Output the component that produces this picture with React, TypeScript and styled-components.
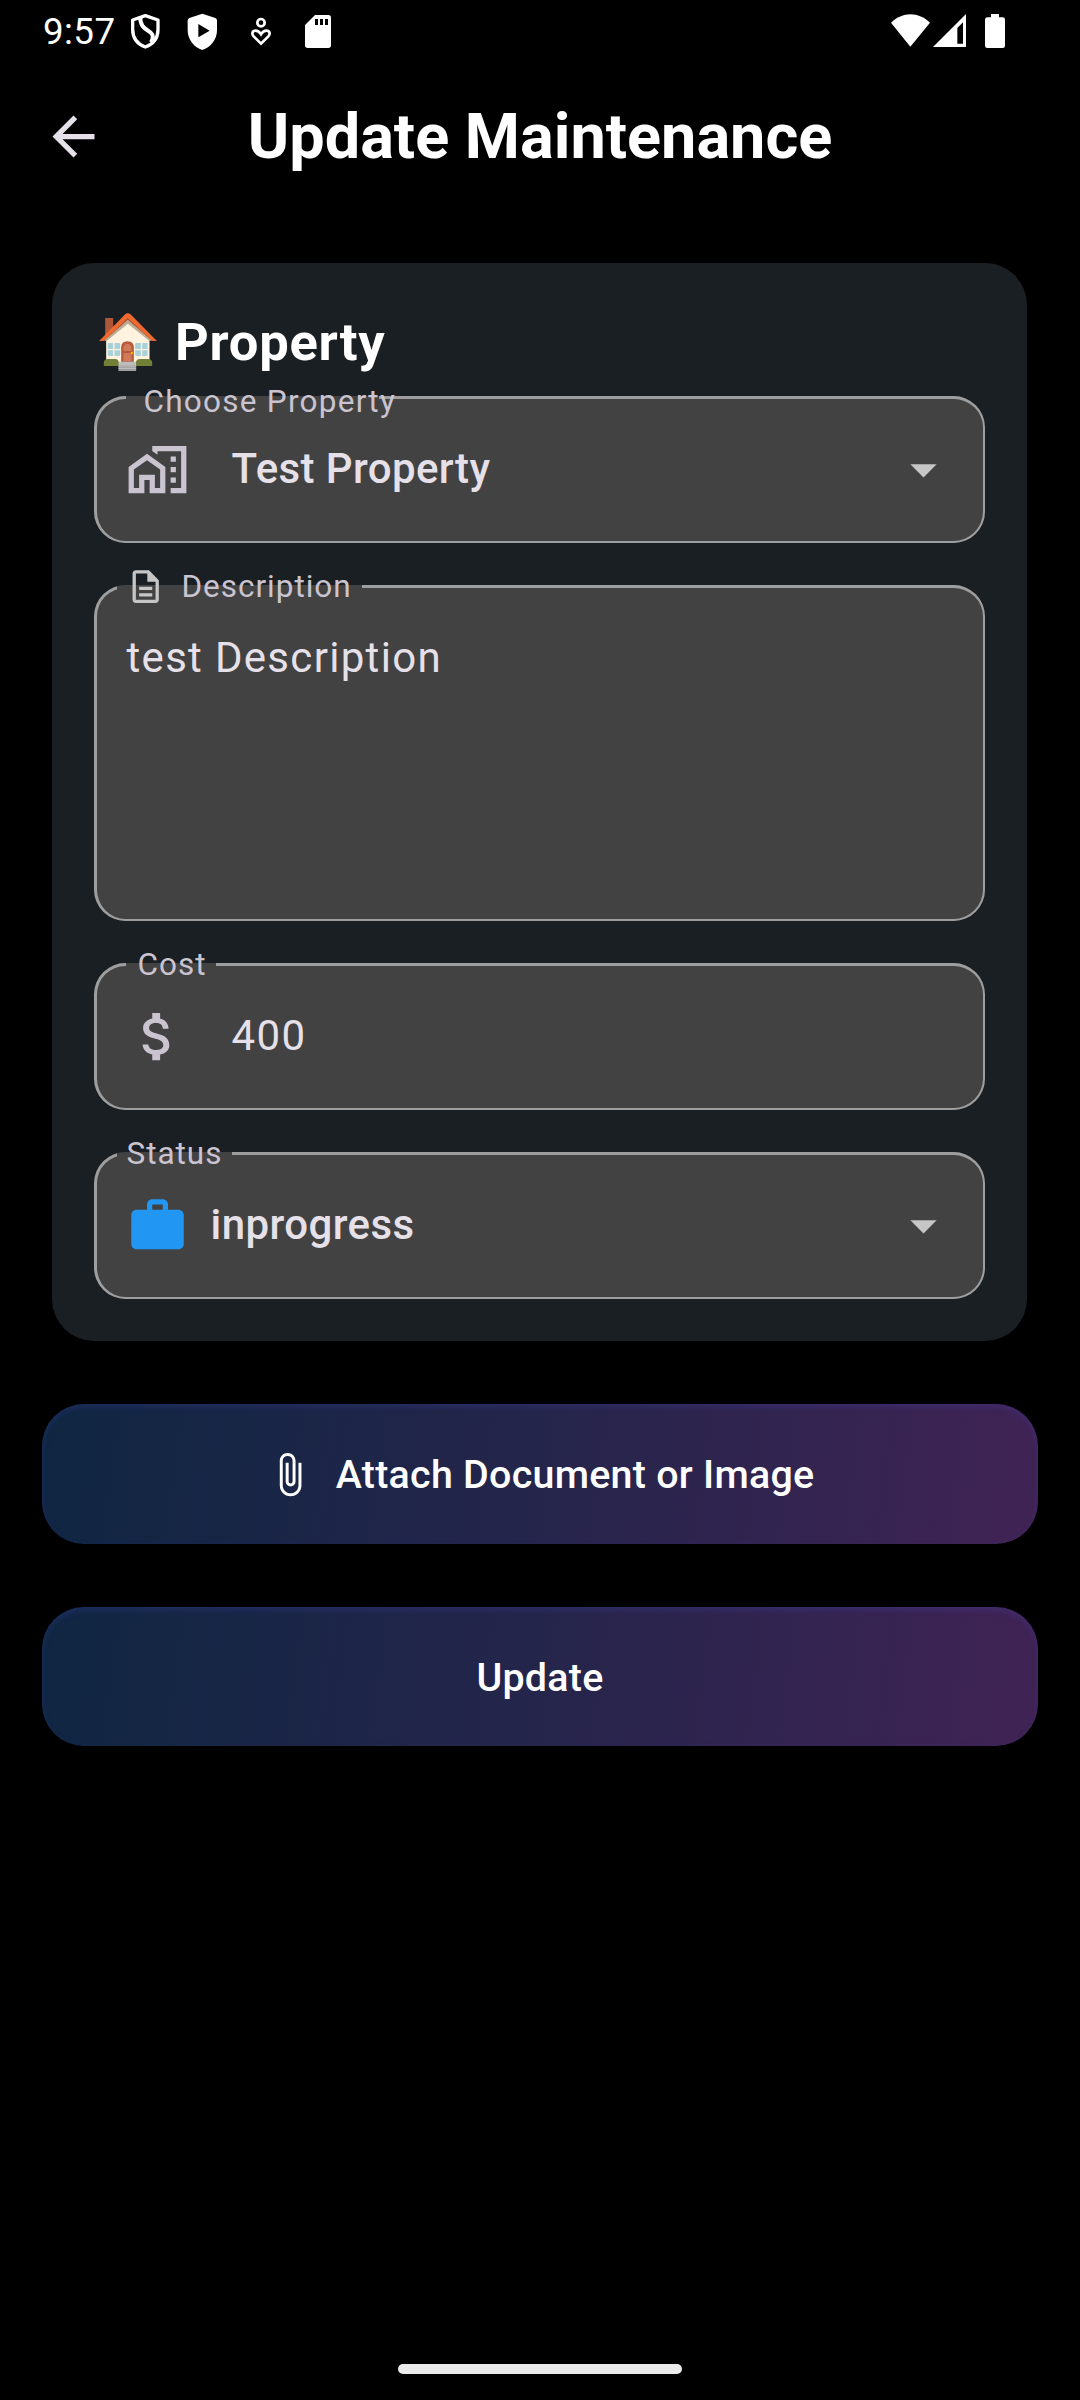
import React from "react";
import styled, { createGlobalStyle } from "styled-components";
import {
  MdArrowBack,
  MdArrowDropDown,
  MdAttachFile,
  MdAttachMoney,
  MdOutlineDescription,
  MdOutlineHomeWork,
  MdWork,
} from "react-icons/md";

const GlobalStyle = createGlobalStyle`
  *, *::before, *::after { box-sizing: border-box; }
  body { margin: 0; background: #000; }
`;

const Screen = styled.div`
  width: 1080px;
  height: 2400px;
  background: #000;
  display: flex;
  flex-direction: column;
  font-family: Roboto, "Liberation Sans", sans-serif;
  color: #e6e0e9;
  overflow: hidden;
  svg { display: block; flex: none; }
`;

const StatusBar = styled.div`
  height: 63px;
  padding: 0 75px 0 43px;
  display: flex;
  justify-content: space-between;
`;

const Clock = styled.span`
  font-size: 36.75px;
  line-height: 43px;
  letter-spacing: 0.4px;
  color: #fff;
  width: 87px;
  margin-top: 10px;
  white-space: nowrap;
`;

const StatusGroup = styled.div`
  display: flex;
  align-items: flex-start;
`;

const Glyph = styled.svg<{ $top: number; $left?: number }>`
  margin-top: ${(p) => p.$top}px;
  margin-left: ${(p) => p.$left ?? 0}px;
`;

const AppBar = styled.header`
  height: 147px;
  padding: 0 42px;
  display: grid;
  grid-template-columns: 63px 1fr 63px;
  align-items: center;
`;

const Title = styled.h1`
  margin: 0;
  text-align: center;
  font-size: 63px;
  line-height: 74px;
  font-weight: 700;
  color: #fff;
  white-space: nowrap;
`;

const Card = styled.section`
  margin: 53px 53px 0 52px;
  padding: 42px;
  height: 1078px;
  border-radius: 42px;
  background: #1a1f23;
  display: flex;
  flex-direction: column;
`;

const Heading = styled.h2`
  margin: 5px 0 0 5px;
  height: 64px;
  display: flex;
  align-items: center;
  gap: 18px;
  font-size: 52.5px;
  line-height: 62px;
  font-weight: 700;
  letter-spacing: 0.75px;
  color: #fff;
`;

/* The outline sits half a legend below the top of the fieldset. */
const Outlined = styled.fieldset<{ $height: number; $first?: boolean }>`
  min-width: 0;
  margin: ${(p) => (p.$first ? 5 : 25)}px 0 0;
  padding: 0;
  height: ${(p) => p.$height + 17}px;
  border: solid #9e9e9e;
  border-width: 3px 2px 2px 3px;
  border-radius: 31.5px;
  background: #424242;
`;

const Legend = styled.legend<{ $inset: number; $width: number; $pad: number; $drop?: number }>`
  margin-left: ${(p) => p.$inset}px;
  padding: ${(p) => (p.$drop ?? 0) * 2}px 0 0 ${(p) => p.$pad}px;
  width: ${(p) => p.$width}px;
  height: 37px;
  display: flex;
  align-items: center;
  font-size: 31.5px;
  line-height: 37px;
  letter-spacing: ${(p) => (p.$drop ? 1.25 : 0.98)}px;
  color: #cac4d0;
  white-space: nowrap;
`;

const LegendIcon = styled.span`
  margin: 0 16px 0 -1px;
  color: #c6c6c6;
`;

const Row = styled.div<{ $gap: number }>`
  height: 125px;
  margin-top: -16px;
  padding: 13px 28px 0 29px;
  display: flex;
  align-items: center;
  gap: ${(p) => p.$gap}px;
`;

const Lead = styled.span<{ $color?: string }>`
  color: ${(p) => p.$color ?? "#cac4d0"};
`;

const Value = styled.span<{ $medium?: boolean }>`
  flex: 1;
  padding-left: 0.6px;
  font-size: 42px;
  line-height: 50px;
  margin-top: -1px;
  font-weight: ${(p) => (p.$medium ? 500 : 400)};
  letter-spacing: ${(p) => (p.$medium ? 0.4 : 1.31)}px;
`;

const Caret = styled.span`
  color: #c6c6c6;
`;

const Paragraph = styled.p`
  margin: 21px 29px 0 29.5px;
  font-size: 42px;
  line-height: 63px;
  letter-spacing: 1.31px;
`;

const Actions = styled.div`
  padding: 63px 42px 0;
  display: flex;
  flex-direction: column;
  gap: 63px;
`;

const GradientButton = styled.button<{ $height: number }>`
  height: ${(p) => p.$height}px;
  padding: ${(p) => 141 - p.$height}px 0 0;
  border: 0;
  border-radius: 42px;
  display: flex;
  align-items: center;
  justify-content: center;
  gap: 23px;
  background: linear-gradient(98deg, #0f2642 0%, #25254b 50%, #402355 100%);
  box-shadow: inset 0 3px 6px rgba(80, 80, 210, 0.2);
  color: #fff;
  font-family: inherit;
  font-size: 39.4px;
  line-height: 46px;
  font-weight: 500;
  letter-spacing: 0.26px;
`;

const Spacer = styled.div`
  flex: 1;
`;

const HomeIndicator = styled.div`
  width: 284px;
  height: 10px;
  margin: 0 auto 26px;
  border-radius: 5px;
  background: #ebebeb;
`;

const SwirlShield = () => (
  <Glyph $top={13} width={31} height={37} viewBox="387 39 93 111" fill="none" stroke="#fff" strokeWidth="10">
    <path d="M433 47 L471 60 V88 C471 115 456 133 433 141 C410 133 395 115 395 88 V60 Z" strokeLinejoin="round" />
    <path d="M418 50 C416 90 446 88 454 104 C457 111 454 120 450 127" strokeWidth="12" />
  </Glyph>
);

const PlayShield = () => (
  <Glyph $top={13} $left={26} width={31} height={37} viewBox="560 39 93 111">
    <path
      fill="#fff"
      fillRule="evenodd"
      d="M606 41 L645 54 Q650 56 650 61 V91 C650 120 630 143 606 150 C582 143 562 120 562 91 V61 Q562 56 567 54 Z M594 72 V112 L628 92 Z"
    />
  </Glyph>
);

const PersonHeart = () => (
  <Glyph $top={17} $left={32} width={22} height={29} viewBox="747 51 66 87" fill="none" stroke="#fff" strokeWidth="8">
    <circle cx="780" cy="68" r="11" />
    <path d="M780 131 L758 109 C751 101 754 92 764 92 C773 92 776 97 780 103 C784 97 787 92 796 92 C806 92 809 101 802 109 Z" />
  </Glyph>
);

const SdCard = () => (
  <Glyph $top={15} $left={33} width={26} height={33} viewBox="915 45 78 99">
    <path
      fill="#fff"
      fillRule="evenodd"
      d="M945 45 H985 Q993 45 993 53 V136 Q993 144 985 144 H923 Q915 144 915 136 V75 Z M945 57 V75 H954 V57 Z M960 57 V75 H969 V57 Z M975 57 V75 H984 V57 Z"
    />
  </Glyph>
);

const Wifi = () => (
  <Glyph $top={14} width={39} height={33} viewBox="153 42 117 99">
    <path fill="#fff" d="M153 68 C187 34 236 34 270 68 L211 140 Z" />
  </Glyph>
);

const Signal = () => (
  <Glyph $top={14} $left={3} width={33} height={33} viewBox="279 42 99 99">
    <path fill="#fff" fillRule="evenodd" d="M378 42 V141 H279 Z M369 67 L352 84 V131 H369 Z" />
  </Glyph>
);

const Battery = () => (
  <Glyph $top={14} $left={19} width={20} height={34} viewBox="435 42 60 102">
    <path fill="#fff" d="M453 42 H477 V52 H488 Q495 52 495 59 V137 Q495 144 488 144 H442 Q435 144 435 137 V59 Q435 52 442 52 H453 Z" />
  </Glyph>
);

const House = () => (
  <svg width="58" height="58" viewBox="177 192 173 174">
    <path fill="#ae5738" d="M195 207 H219 V238 L195 260 Z" />
    <path fill="#fff3e0" d="M198 262 L263 212 L328 262 V350 H198 Z" />
    <path fill="#bcaa94" d="M190 274 L263 210 L337 274 L328 276 L263 224 L199 276 Z" />
    <path fill="#a9502f" d="M177 276 L263 200 L350 276 H337 L263 212 L190 276 Z" />
    <path fill="#f0692f" d="M177 276 L255 196 Q263 189 271 196 L350 276 L336 275 L263 207 L191 275 Z" />
    <g fill="#a9d1d9">
      <rect x="203" y="282" width="37" height="39" rx="4" />
      <rect x="285" y="282" width="37" height="39" rx="4" />
    </g>
    <path stroke="#fff3e0" strokeWidth="4" d="M203 302 H240 M221 282 V321 M285 302 H322 M304 282 V321" />
    <path fill="#b55a3c" d="M243 340 V295 Q243 277 262 277 Q281 277 281 295 V340 Z" />
    <path fill="#d17a5a" d="M250 306 V297 Q251 285 262 284 Q273 285 274 297 V306 Z M250 312 H274 V336 H250 Z" />
    <circle cx="275" cy="312" r="3.5" fill="#ffc107" />
    <path fill="#728036" d="M191 351 V342 Q191 330 203 330 H225 Q236 330 236 342 V351 Z M287 351 V342 Q288 330 299 330 H324 Q336 330 336 342 V351 Z" />
    <path fill="#bdbdbd" d="M236 338 H287 V350 H236 Z" />
    <path fill="#9e9e9e" d="M235 348 H288 V366 H235 Z" />
    <path stroke="#c4c4c4" strokeWidth="3" d="M235 351 H288 M235 358 H288" />
  </svg>
);

export default function App() {
  return (
    <Screen>
      <GlobalStyle />
      <StatusBar>
        <StatusGroup>
          <Clock>9:57</Clock>
          <SwirlShield />
          <PlayShield />
          <PersonHeart />
          <SdCard />
        </StatusGroup>
        <StatusGroup>
          <Wifi />
          <Signal />
          <Battery />
        </StatusGroup>
      </StatusBar>

      <AppBar>
        <MdArrowBack size={63} />
        <Title>Update Maintenance</Title>
      </AppBar>

      <Card>
        <Heading>
          <House />
          Property
        </Heading>

        <Outlined $height={147} $first>
          <Legend $inset={29} $width={253} $pad={17.5} $drop={4}>Choose Property</Legend>
          <Row $gap={42}>
            <Lead><MdOutlineHomeWork size={63} /></Lead>
            <Value $medium>Test Property</Value>
            <Caret><MdArrowDropDown size={63} /></Caret>
          </Row>
        </Outlined>

        <Outlined $height={336}>
          <Legend $inset={20} $width={245} $pad={10}>
            <LegendIcon><MdOutlineDescription size={39.4} /></LegendIcon>
            Description
          </Legend>
          <Paragraph>test Description</Paragraph>
        </Outlined>

        <Outlined $height={147}>
          <Legend $inset={29} $width={90} $pad={11.5}>Cost</Legend>
          <Row $gap={42}>
            <Lead><MdAttachMoney size={63} /></Lead>
            <Value>400</Value>
          </Row>
        </Outlined>

        <Outlined $height={147}>
          <Legend $inset={20} $width={115} $pad={9.5}>Status</Legend>
          <Row $gap={21}>
            <Lead $color="#2196f3"><MdWork size={63} /></Lead>
            <Value $medium>inprogress</Value>
            <Caret><MdArrowDropDown size={63} /></Caret>
          </Row>
        </Outlined>
      </Card>

      <Actions>
        <GradientButton $height={140}>
          <MdAttachFile size={47.25} />
          Attach Document or Image
        </GradientButton>
        <GradientButton $height={139}>Update</GradientButton>
      </Actions>

      <Spacer />
      <HomeIndicator />
    </Screen>
  );
}
